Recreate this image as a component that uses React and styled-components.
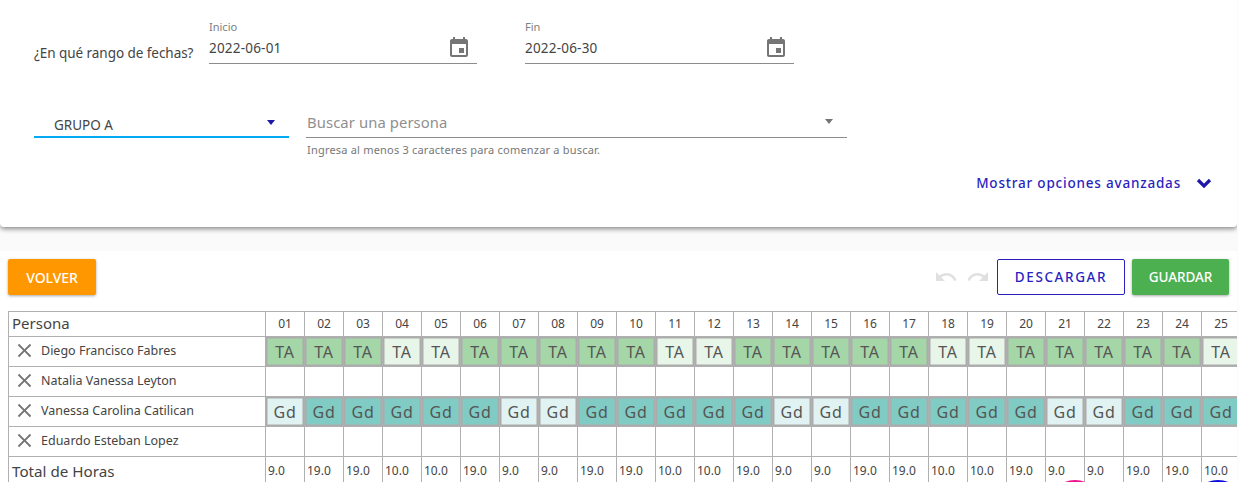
import React from "react";
import styled, { createGlobalStyle } from "styled-components";

const GlobalStyle = createGlobalStyle`
  html, body {
    margin: 0;
    width: 1238px;
    height: 482px;
    overflow: hidden;
    background: #fafafa;
    font-family: "Noto Sans", "Open Sans", sans-serif;
    color: #333;
  }
`;

const DAYS = Array.from({ length: 25 }, (_, i) => String(i + 1).padStart(2, "0"));
const TOTALS = [
  "9.0", "19.0", "19.0", "10.0", "10.0", "19.0", "9.0", "9.0", "19.0", "19.0", "10.0", "10.0", "19.0",
  "9.0", "9.0", "19.0", "19.0", "10.0", "10.0", "19.0", "9.0", "9.0", "19.0", "19.0", "10.0",
];
const PEOPLE = [
  { name: "Diego Francisco Fabres", shift: "TA", off: ["04", "05", "11", "12", "18", "19", "25"] },
  { name: "Natalia Vanessa Leyton" },
  { name: "Vanessa Carolina Catilican", shift: "Gd", off: ["01", "07", "08", "14", "15", "21", "22"] },
  { name: "Eduardo Esteban Lopez" },
];

const SHIFT_COLORS = {
  TA: { on: "#a5d6a7", off: "#e8f5e9" },
  Gd: { on: "#80cbc4", off: "#e0f2f1" },
};

const Page = styled.div`
  width: 1237px;
  height: 482px;
  position: relative;
  overflow: hidden;
`;

const FilterCard = styled.section`
  height: 227px;
  box-sizing: border-box;
  background: #fff;
  border-radius: 0 0 4px 4px;
  box-shadow: 0 2px 5px rgba(0, 0, 0, 0.45);
  padding: 20px 25px 0 34px;
  display: flex;
  flex-direction: column;
`;

const DateRow = styled.div`
  display: flex;
  align-items: flex-end;
  height: 44px;
`;

const RangeLabel = styled.span`
  width: 175px;
  font-size: 13.5px;
  line-height: 18px;
  color: #444;
  margin-bottom: 2px;
  white-space: nowrap;
  letter-spacing: -0.05px;
`;

const DateField = styled.div`
  width: ${(p) => p.$width}px;
  margin-right: ${(p) => p.$gap}px;
  border-bottom: 1px solid #8c8c8c;
  display: flex;
  flex-direction: column;
  height: 44px;
  box-sizing: border-box;
  position: relative;
`;

const FieldLabel = styled.label`
  font-size: 11px;
  line-height: 15px;
  color: #808080;
  margin-top: -1px;
`;

const FieldValue = styled.span`
  font-size: 13.5px;
  line-height: 18px;
  margin-top: 5px;
  color: #444;
  letter-spacing: 0.2px;
`;

const CalendarIcon = styled.svg`
  position: absolute;
  right: 6px;
  top: 16px;
  width: 24px;
  height: 24px;
  fill: #757575;
`;

const SearchRow = styled.div`
  display: flex;
  margin-top: 43px;
  align-items: flex-start;
`;

const GroupSelect = styled.div`
  width: 255px;
  height: 31px;
  box-sizing: border-box;
  border-bottom: 2px solid #03a9f4;
  display: flex;
  align-items: flex-start;
  justify-content: space-between;
  padding: 9px 14px 0 20px;
  font-size: 13.5px;
  line-height: 18px;
  color: #444;
`;

const Caret = styled.i`
  width: 0;
  height: 0;
  margin-top: ${(p) => p.$top}px;
  border-left: 4.5px solid transparent;
  border-right: 4.5px solid transparent;
  border-top: 5px solid ${(p) => p.$color};
`;

const SearchBox = styled.div`
  width: 541px;
  margin-left: 17px;
`;

const SearchInput = styled.div`
  height: 31px;
  box-sizing: border-box;
  border-bottom: 1px solid #8c8c8c;
  display: flex;
  justify-content: space-between;
  padding: 5px 14px 0 1px;
  font-size: 14.8px;
  line-height: 20px;
  color: #8f8f8f;
  letter-spacing: 0.1px;
`;

const HelperText = styled.p`
  margin: 5px 0 0 1px;
  font-size: 11px;
  line-height: 14px;
  color: #777;
  letter-spacing: 0.2px;
`;

const AdvancedRow = styled.div`
  display: flex;
  justify-content: flex-end;
  align-items: center;
  gap: 15px;
  margin-top: 14px;
  color: #2a1fbf;
  font-size: 13.5px;
  line-height: 24px;
  font-weight: 500;
  letter-spacing: 0.8px;
`;

const ChevronIcon = styled.svg`
  width: 16px;
  height: 16px;
  fill: none;
  stroke: #1f17a8;
  stroke-width: 3.2;
`;

const ScheduleCard = styled.section`
  margin-top: 24px;
  height: 231px;
  background: #fff;
  padding: 8px 0 0 8px;
  box-sizing: border-box;
`;

const Toolbar = styled.div`
  height: 36px;
  display: flex;
  align-items: center;
  padding-right: 8px;
  margin-bottom: 16px;
`;

const ActionButton = styled.button`
  height: 36px;
  box-sizing: border-box;
  width: ${(p) => p.$width}px;
  border-radius: 2px;
  border: ${(p) => (p.$outline ? "1px solid #2a1fbf" : "none")};
  background: ${(p) => p.$bg};
  color: ${(p) => p.$color};
  font-family: inherit;
  font-size: ${(p) => p.$size}px;
  font-weight: 500;
  letter-spacing: ${(p) => (p.$outline ? "1.6px" : "-0.1px")};
  box-shadow: ${(p) => (p.$outline ? "none" : "0 1px 3px rgba(0, 0, 0, 0.35)")};
  margin-left: ${(p) => p.$gap || 0}px;
  padding: 0;
`;

const Spacer = styled.div`
  flex: 1;
`;

const HistoryIcon = styled.svg`
  width: 24px;
  height: 24px;
  fill: #e0e0e0;
  margin-right: ${(p) => p.$gap}px;
`;

const ScheduleTable = styled.table`
  table-layout: fixed;
  width: 1231px;
  border-collapse: collapse;
  border-left: 1px solid #b0b0b0;
  border-top: 1px solid #b0b0b0;
`;

const NameCol = styled.col`
  width: 257px;
`;

const DayCol = styled.col`
  width: 39px;
`;

const Row = styled.tr`
  height: ${(p) => p.$height}px;
`;

const HeadCell = styled.th`
  padding: 0 0 2px 3px;
  border: 1px solid #b0b0b0;
  font-weight: 400;
  text-align: left;
  font-size: 15px;
  color: #444;
  white-space: nowrap;
`;

const DayCell = styled.td`
  padding: 0 0 1px;
  border: 1px solid #b0b0b0;
  text-align: center;
  font-size: 12px;
  color: #444;
`;

const NameCell = styled.td`
  padding: 0;
  border: 1px solid #b0b0b0;
`;

const PersonName = styled.div`
  display: flex;
  align-items: center;
  height: 28px;
  padding-left: 4px;
  gap: 5px;
  font-size: 12.5px;
  color: #444;
  margin-top: -2px;
`;

const CloseIcon = styled.svg`
  width: 23px;
  height: 23px;
  fill: #757575;
  flex-shrink: 0;
`;

const ShiftCell = styled.td`
  padding: 0;
  height: 29px;
  border: 1px solid #b0b0b0;
  box-shadow: inset 0 0 0 1.5px #acacac;
  background: ${(p) => p.$bg};
  text-align: center;
  font-size: 16px;
  color: #555;
  letter-spacing: 0.7px;
`;

const TotalCell = styled.td`
  padding: 0 0 2px 2px;
  border: 1px solid #b0b0b0;
  font-size: 12px;
  color: #444;
  white-space: nowrap;
`;

const TotalLabel = styled.td`
  padding: 0 0 2px 3px;
  border: 1px solid #b0b0b0;
  font-size: 15.2px;
  color: #444;
`;

const Fab = styled.span`
  position: absolute;
  width: 56px;
  height: 56px;
  top: 480px;
  left: ${(p) => p.$left}px;
  border-radius: 50%;
  background: ${(p) => p.$color};
`;

function Calendar() {
  return (
    <CalendarIcon viewBox="0 0 24 24">
      <path d="M17 12h-5v5h5v-5zM16 1v2H8V1H6v2H5c-1.11 0-1.99.9-1.99 2L3 19c0 1.1.89 2 2 2h14c1.1 0 2-.9 2-2V5c0-1.1-.9-2-2-2h-1V1h-2zm3 18H5V8h14v11z" />
    </CalendarIcon>
  );
}

function PersonRow({ person }) {
  const colors = SHIFT_COLORS[person.shift];
  return (
    <Row $height={30}>
      <NameCell>
        <PersonName>
          <CloseIcon viewBox="0 0 24 24">
            <path d="M19 6.41L17.59 5 12 10.59 6.41 5 5 6.41 10.59 12 5 17.59 6.41 19 12 13.41 17.59 19 19 17.59 13.41 12z" />
          </CloseIcon>
          {person.name}
        </PersonName>
      </NameCell>
      {DAYS.map((d) =>
        colors ? (
          <ShiftCell key={d} $bg={person.off.includes(d) ? colors.off : colors.on}>
            {person.shift}
          </ShiftCell>
        ) : (
          <DayCell key={d} />
        )
      )}
    </Row>
  );
}

export default function App() {
  return (
    <Page>
      <GlobalStyle />
      <FilterCard>
        <DateRow>
          <RangeLabel>¿En qué rango de fechas?</RangeLabel>
          <DateField $width={268} $gap={48}>
            <FieldLabel>Inicio</FieldLabel>
            <FieldValue>2022-06-01</FieldValue>
            <Calendar />
          </DateField>
          <DateField $width={269} $gap={0}>
            <FieldLabel>Fin</FieldLabel>
            <FieldValue>2022-06-30</FieldValue>
            <Calendar />
          </DateField>
        </DateRow>
        <SearchRow>
          <GroupSelect>
            GRUPO A
            <Caret $color="#1f17a8" $top={4} />
          </GroupSelect>
          <SearchBox>
            <SearchInput>
              Buscar una persona
              <Caret $color="#757575" $top={7} />
            </SearchInput>
            <HelperText>Ingresa al menos 3 caracteres para comenzar a buscar.</HelperText>
          </SearchBox>
        </SearchRow>
        <AdvancedRow>
          Mostrar opciones avanzadas
          <ChevronIcon viewBox="0 0 16 16">
            <path d="M2 5l6 6 6-6" />
          </ChevronIcon>
        </AdvancedRow>
      </FilterCard>
      <ScheduleCard>
        <Toolbar>
          <ActionButton $width={88} $size={14} $bg="#ff9800" $color="#fff">VOLVER</ActionButton>
          <Spacer />
          <HistoryIcon viewBox="0 0 24 24" $gap={8}>
            <path d="M12.5 8c-2.65 0-5.05.99-6.9 2.6L2 7v9h9l-3.62-3.62c1.39-1.16 3.16-1.88 5.12-1.88 3.54 0 6.55 2.31 7.6 5.5l2.37-.78C21.08 11.03 17.15 8 12.5 8z" />
          </HistoryIcon>
          <HistoryIcon viewBox="0 0 24 24" $gap={7}>
            <path d="M18.4 10.6C16.55 8.99 14.15 8 11.5 8c-4.65 0-8.58 3.03-9.96 7.22L3.9 16c1.05-3.19 4.05-5.5 7.6-5.5 1.95 0 3.73.72 5.12 1.88L13 16h9V7l-3.6 3.6z" />
          </HistoryIcon>
          <ActionButton $width={128} $size={13.5} $bg="#fff" $color="#2a1fbf" $outline>DESCARGAR</ActionButton>
          <ActionButton $width={97} $size={13.5} $gap={7} $bg="#4caf50" $color="#fff">GUARDAR</ActionButton>
        </Toolbar>
        <ScheduleTable>
          <colgroup>
            <NameCol />
            {DAYS.map((d) => (
              <DayCol key={d} />
            ))}
          </colgroup>
          <tbody>
            <Row $height={25}>
              <HeadCell>Persona</HeadCell>
              {DAYS.map((d) => (
                <DayCell key={d}>{d}</DayCell>
              ))}
            </Row>
            {PEOPLE.map((p) => (
              <PersonRow key={p.name} person={p} />
            ))}
            <Row $height={30}>
              <TotalLabel>Total de Horas</TotalLabel>
              {TOTALS.map((t, i) => (
                <TotalCell key={i}>{t}</TotalCell>
              ))}
            </Row>
          </tbody>
        </ScheduleTable>
      </ScheduleCard>
      <Fab $left={1047} $color="#f0128c" />
      <Fab $left={1190} $color="#0c0ce0" />
    </Page>
  );
}
